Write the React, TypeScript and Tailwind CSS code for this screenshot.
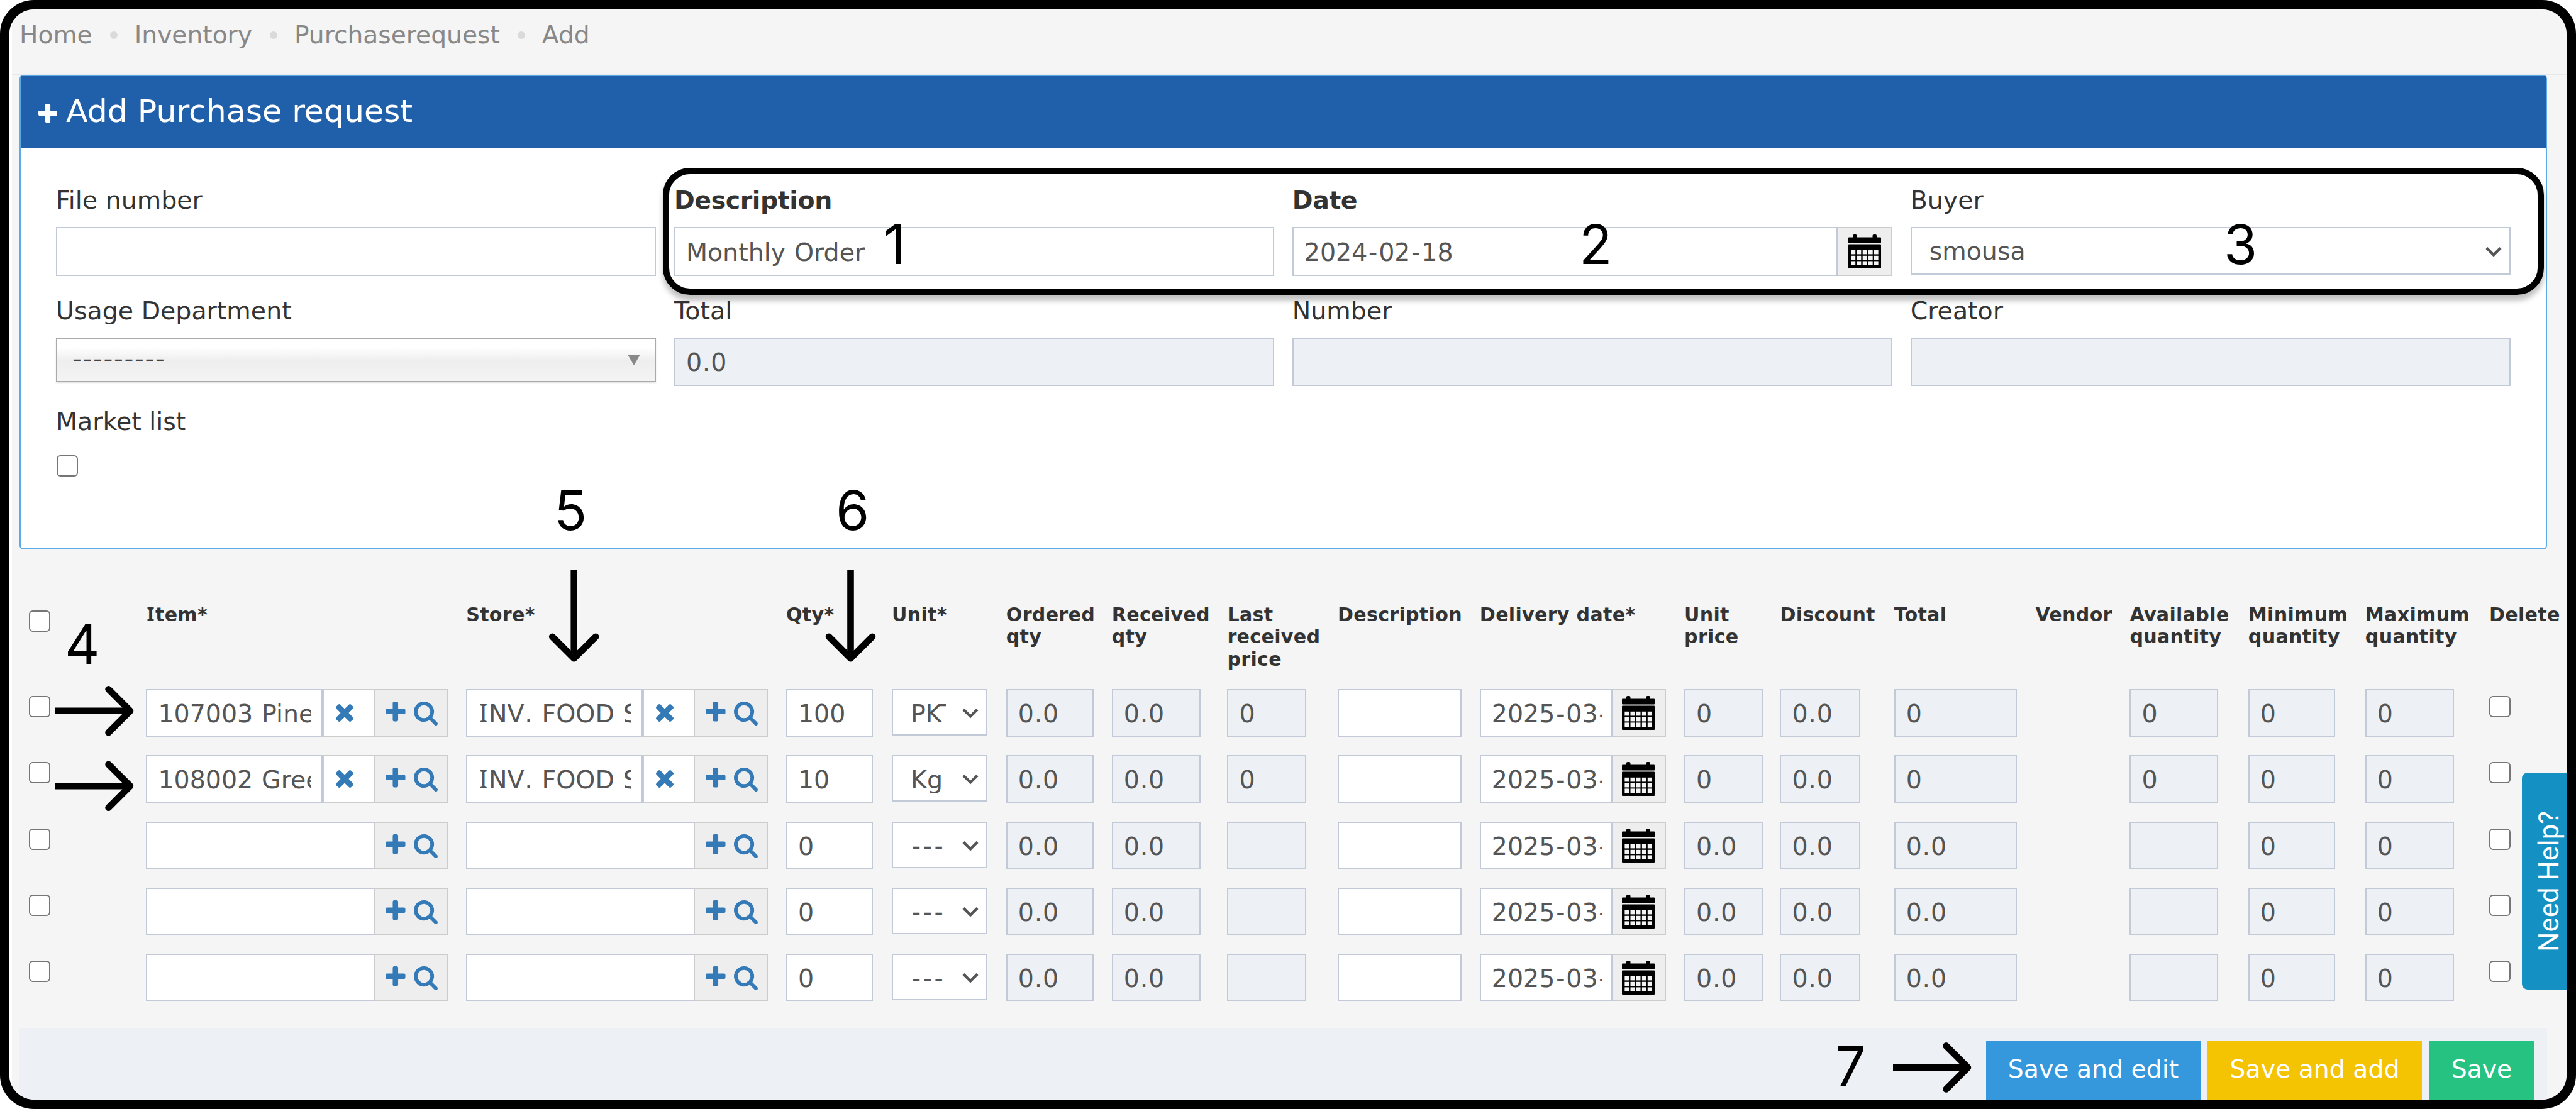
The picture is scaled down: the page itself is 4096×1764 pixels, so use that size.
import React from "react";

const COLS =
  "grid grid-cols-[186.1px_508.8px_508.8px_168px_181.8px_168px_183.7px_175.5px_225.9px_325.2px_152.4px_181.2px_224.8px_150px_188.4px_186px_197.1px_100px]";

function V({ children }: { children: string }) {
  return (
    <>
      {children.split(/([-I.])/).map((part, i) => {
        if (part === "-") return <span key={i} className="mx-[0.046em]">-</span>;
        if (part === ".") return <span key={i} className="mx-[0.02em]">.</span>;
        if (part === "I")
          return (
            <span key={i} className="mx-[0.038em] font-['Noto_Sans'] text-[1.02em] leading-none">
              I
            </span>
          );
        return <React.Fragment key={i}>{part}</React.Fragment>;
      })}
    </>
  );
}

const PlusIcon = ({ className }: { className: string }) => (
  <svg viewBox="192 128 1408 1408" className={className} fill="currentColor">
    <path d="M1600 736v192q0 40-28 68t-68 28h-416v416q0 40-28 68t-68 28h-192q-40 0-68-28t-28-68v-416h-416q-40 0-68-28t-28-68v-192q0-40 28-68t68-28h416v-416q0-40 28-68t68-28h192q40 0 68 28t28 68v416h416q40 0 68 28t28 68z" />
  </svg>
);

const TimesIcon = ({ className }: { className: string }) => (
  <svg viewBox="302 366 1188 1188" className={className} fill="currentColor">
    <path d="M1490 1322q0 40-28 68l-136 136q-28 28-68 28t-68-28l-294-294-294 294q-28 28-68 28t-68-28l-136-136q-28-28-28-68t28-68l294-294-294-294q-28-28-28-68t28-68l136-136q28-28 68-28t68 28l294 294 294-294q28-28 68-28t68 28l136 136q28 28 28 68t-28 68l-294 294 294 294q28 28 28 68z" />
  </svg>
);

const SearchIcon = ({ className }: { className: string }) => (
  <svg viewBox="64 128 1664 1664" className={className} fill="currentColor">
    <path d="M1216 832q0-185-131.500-316.500t-316.500-131.500-316.500 131.500-131.500 316.500 131.500 316.500 316.500 131.500 316.500-131.500 131.500-316.500zm512 832q0 52-38 90t-90 38q-54 0-90-38l-343-342q-179 124-399 124-143 0-273.500-55.500t-225-150-150-225-55.500-273.500 55.500-273.500 150-225 225-150 273.500-55.500 273.500 55.500 225 150 150 225 55.500 273.500q0 220-124 399l343 343q37 37 37 90z" />
  </svg>
);

function CalendarIcon() {
  return (
    <svg viewBox="0 0 52 54" className="h-[54px] w-[52px] shrink-0">
      <rect x="7" y="0" width="6.5" height="8" rx="2" />
      <rect x="38.5" y="0" width="6.5" height="8" rx="2" />
      <rect x="0" y="4.5" width="52" height="9" rx="1" />
      <rect x="0" y="15.5" width="52" height="38.5" rx="1" />
      {[4.4, 13.5, 22.7, 31.9, 40.8].map((x) =>
        [24.8, 33.8, 42.4].map((y) => (
          <rect key={`${x}-${y}`} x={x} y={y} width="6.8" height="6.6" fill="#f4f4f4" />
        )),
      )}
    </svg>
  );
}

const Chevron = () => (
  <svg viewBox="0 0 26 17" className="h-[17px] w-[26px]" fill="none" stroke="#555" strokeWidth="4.4">
    <path d="M2 2.5 13 13.5 24 2.5" />
  </svg>
);

const Box = ({ className = "" }: { className?: string }) => (
  <div className={`size-[34px] rounded-[6px] border-[2.5px] border-[#767676] bg-white ${className}`} />
);

function Input({
  value = "",
  ro = false,
  className = "",
}: {
  value?: string;
  ro?: boolean;
  className?: string;
}) {
  return (
    <div
      className={`flex items-center border-2 border-[#c2cad8] pt-[2px] pr-[17px] pl-[17px] text-[39.5px] text-[#555] ${
        ro ? "bg-[#edf1f6]" : "bg-white"
      } ${className}`}
    >
      <div className="w-full overflow-hidden whitespace-nowrap leading-[60px] [word-spacing:0.034em]">
        <V>{value}</V>
      </div>
    </div>
  );
}

function Field({
  label,
  bold = false,
  children,
}: {
  label: string;
  bold?: boolean;
  children: React.ReactNode;
}) {
  return (
    <div className="flex flex-col gap-[11px]">
      <div className={`h-[60px] text-[39.5px] leading-[57px] text-[#333] ${bold ? "font-bold tracking-[-0.4px]" : ""}`}>
        {label}
      </div>
      {children}
    </div>
  );
}

function Lookup({ value }: { value: string }) {
  return (
    <div className="flex h-[76px] w-[479.4px]">
      {value ? (
        <>
          <Input value={value} className="h-[76px] w-[280.6px]" />
          <div className="flex h-[76px] w-[81.4px] items-center border-y-2 border-l-2 border-[#ccc] bg-white pl-[19px]">
            <TimesIcon className="size-[28px] text-[#337ab7]" />
          </div>
        </>
      ) : (
        <Input className="h-[76px] w-[362px] border-r-0" />
      )}
      <div className="flex h-[76px] grow items-start border-2 border-[#ccc] bg-[#eee] pt-[18px] pl-[17px] text-[#337ab7]">
        <PlusIcon className="size-[31.5px]" />
        <SearchIcon className="ml-[13px] size-[38px]" />
      </div>
    </div>
  );
}

function UnitSelect({ value }: { value: string }) {
  return (
    <div className="flex h-[74px] w-[152px] items-center border-2 border-[#c2cad8] bg-white pt-[3px] pl-[28px] text-[39.5px] text-[#555]">
      <div className="w-[56px] overflow-hidden whitespace-nowrap leading-[60px]">
        <V>{value}</V>
      </div>
      <div className="ml-[26px] shrink-0">
        <Chevron />
      </div>
    </div>
  );
}

type Row = {
  item: string;
  store: string;
  qty: string;
  unit: string;
  last: string;
  price: string;
  total: string;
  avail: string;
};

const empty: Row = { item: "", store: "", qty: "0", unit: "---", last: "", price: "0.0", total: "0.0", avail: "" };

const rows: Row[] = [
  { item: "107003 Pine", store: "INV. FOOD S", qty: "100", unit: "PKT", last: "0", price: "0", total: "0", avail: "0" },
  { item: "108002 Gree", store: "INV. FOOD S", qty: "10", unit: "Kg", last: "0", price: "0", total: "0", avail: "0" },
  empty,
  empty,
  empty,
];

const heads = [
  "Item*",
  "Store*",
  "Qty*",
  "Unit*",
  "Ordered\nqty",
  "Received\nqty",
  "Last\nreceived\nprice",
  "Description",
  "Delivery date*",
  "Unit\nprice",
  "Discount",
  "Total",
  "Vendor",
  "Available\nquantity",
  "Minimum\nquantity",
  "Maximum\nquantity",
  "Delete",
];

const Dot = () => <span className="mr-[27px] ml-[28px] size-[12px] rounded-full bg-[#dadada]" />;

const RightArrow = ({ x, y }: { x: number; y: number }) => (
  <g transform={`translate(${x} ${y})`}>
    <path d="M0 0H117" strokeLinecap="butt" />
    <path d="M84.500 -34.500 119 0 84.500 34.500" />
  </g>
);

const DownArrow = ({ x, y }: { x: number; y: number }) => (
  <g transform={`translate(${x} ${y})`}>
    <path d="M0 0V138" strokeLinecap="butt" />
    <path d="M-34.500 106 0 140.500 34.500 106" />
  </g>
);

const mark = "absolute font-['Inter'] text-[86px] leading-[86px] text-black";

export default function App() {
  return (
    <div className="relative h-[1764px] w-[4096px] overflow-hidden bg-white font-['DejaVu_Sans',sans-serif]">
      <div className="h-[1764px] w-[4096px] overflow-hidden rounded-[54px] border-[15px] border-black bg-white">
        <div className="flex h-[1734px] flex-col border-l-[4px] border-white bg-[#f5f5f5]">
          <nav className="flex h-[104px] shrink-0 items-center border-b-2 border-[#e5e9ee] pb-[20px] pl-[12px] text-[39.2px] text-[#888]">
            <span>Home</span>
            <Dot />
            <span>Inventory</span>
            <Dot />
            <span>Purchaserequest</span>
            <Dot />
            <span>Add</span>
          </nav>

          <section className="ml-[12px] h-[755px] w-[4019px] shrink-0 rounded-[6px] border-2 border-[#5cabe6] bg-white">
            <header className="flex h-[114px] items-center bg-[#205faa] pl-[28px] text-white">
              <PlusIcon className="mt-[3px] size-[30px]" />
              <h1 className="-mt-[2px] ml-[14px] text-[50.5px] leading-[60px]">Add Purchase request</h1>
            </header>
            <div className="grid auto-rows-[176px] grid-cols-4 gap-x-[28.5px] px-[56px] pt-[54.500px]">
              <Field label="File number">
                <Input className="h-[78px]" />
              </Field>
              <Field label="Description" bold>
                <Input value="Monthly Order" className="h-[78px]" />
              </Field>
              <Field label="Date" bold>
                <div className="flex">
                  <Input value="2024-02-18" className="h-[78px] grow" />
                  <div className="flex h-[78px] w-[87px] items-center border-2 border-l-0 border-[#ccc] bg-[#eee] pl-[17px]">
                    <CalendarIcon />
                  </div>
                </div>
              </Field>
              <Field label="Buyer">
                <div className="flex h-[76px] items-center justify-between border-2 border-[#c2cad8] bg-white pt-[3px] pr-[12px] pl-[28px] text-[39.5px] text-[#555]">
                  <span>smousa</span>
                  <Chevron />
                </div>
              </Field>
              <Field label="Usage Department">
                <div className="flex h-[71px] items-center justify-between border-2 border-[#aaa] bg-linear-to-b from-white from-20% via-[#eee] via-52% to-[#f4f4f4] pr-[23px] pl-[24px] text-[41px] text-[#444] shadow-[0_2px_2px_rgba(0,0,0,0.1)]">
                  <span className="tracking-[1.7px]">---------</span>
                  <svg viewBox="0 0 20 17" className="h-[17px] w-[20px]" fill="#888">
                    <path d="M0 0H20L10 17Z" />
                  </svg>
                </div>
              </Field>
              <Field label="Total">
                <Input value="0.0" ro className="h-[77px]" />
              </Field>
              <Field label="Number">
                <Input ro className="h-[77px]" />
              </Field>
              <Field label="Creator">
                <Input ro className="h-[77px]" />
              </Field>
              <Field label="Market list">
                <Box className="mt-[11px] ml-px" />
              </Field>
            </div>
          </section>

          <div className="shrink-0 pt-[86.500px] pl-[27.300px]">
            <div className={`${COLS} h-[135.500px] text-[30.1px] leading-[35.6px] font-bold tracking-[0.3px] text-[#333]`}>
              <Box className="mt-[10px]" />
              {heads.map((h, i) => (
                <div key={i} className="-mt-px whitespace-pre">
                  <V>{h}</V>
                </div>
              ))}
            </div>
            {rows.map((r, i) => (
              <div key={i} className={`${COLS} h-[105.300px] items-start`}>
                <Box className="mt-[11px]" />
                <Lookup value={r.item} />
                <Lookup value={r.store} />
                <Input value={r.qty} className="h-[76px] w-[138.500px]" />
                <UnitSelect value={r.unit} />
                <Input value="0.0" ro className="h-[76px] w-[138.800px]" />
                <Input value="0.0" ro className="h-[76px] w-[141.500px]" />
                <Input value={r.last} ro className="h-[76px] w-[126px]" />
                <Input className="h-[76px] w-[196.600px]" />
                <div className="flex w-[295.800px]">
                  <div className="flex h-[76px] w-[211px] items-center border-2 border-[#c2cad8] bg-white pt-[2px] pl-[17px] text-[39.5px] text-[#555]">
                    <div className="w-[175.500px] overflow-hidden whitespace-nowrap leading-[60px]">
                      <V>2025-03-</V>
                    </div>
                  </div>
                  <div className="flex h-[76px] grow items-start border-2 border-l-0 border-[#ccc] bg-[#eee] pt-[9px] pl-[15px]">
                    <CalendarIcon />
                  </div>
                </div>
                <Input value={r.price} ro className="h-[76px] w-[125.200px]" />
                <Input value="0.0" ro className="h-[76px] w-[127.900px]" />
                <Input value={r.total} ro className="h-[76px] w-[195.300px]" />
                <div />
                <Input value={r.avail} ro className="h-[76px] w-[140.800px]" />
                <Input value="0" ro className="h-[76px] w-[138.400px]" />
                <Input value="0" ro className="h-[76px] w-[140.900px]" />
                <Box className="mt-[11px]" />
              </div>
            ))}
          </div>

          <footer className="mt-[13px] ml-[12px] flex w-[4019px] grow items-stretch justify-end gap-[11px] bg-[#edf1f6] pt-[21px] pr-[20px] text-[39.4px] leading-[88px] text-white">
            <div className="w-[341px] bg-[#3598dc] text-center">Save and edit</div>
            <div className="w-[341px] bg-[#f4c302] text-center">Save and add</div>
            <div className="w-[168px] bg-[#26c281] text-center">Save</div>
          </footer>
        </div>
      </div>

      <div className="absolute top-[1229px] left-[4010px] flex h-[345px] w-[71px] items-center justify-end rounded-l-[9px] bg-[#1590c2]">
        <span className="rotate-180 font-['Roboto'] text-[43.8px] leading-[56px] whitespace-nowrap text-white [writing-mode:vertical-rl]">
          Need Help?
        </span>
      </div>

      <div className="absolute top-[266.500px] left-[1054px] h-[202.500px] w-[2991px] rounded-[43px] border-[10.600px] border-black shadow-[0_8.5px_8.5px_rgba(0,0,0,0.25)]" />

      <svg
        viewBox="0 0 4096 1764"
        className="absolute top-0 left-0 h-[1764px] w-[4096px]"
        fill="none"
        stroke="#000"
        strokeWidth="10.6"
        strokeLinecap="round"
        strokeLinejoin="round"
      >
        <DownArrow x={912.7} y={906.7} />
        <DownArrow x={1352.5} y={906.7} />
        <RightArrow x={88} y={1130.8} />
        <RightArrow x={88} y={1250.2} />
        <RightArrow x={3010} y={1697.9} />
      </svg>

      <span className={`${mark} top-[346px] left-[1405px]`}>1</span>
      <span className={`${mark} top-[346px] left-[2511px]`}>2</span>
      <span className={`${mark} top-[346px] left-[3536px]`}>3</span>
      <span className={`${mark} top-[982px] left-[103px]`}>4</span>
      <span className={`${mark} top-[769px] left-[881px]`}>5</span>
      <span className={`${mark} top-[769px] left-[1329px]`}>6</span>
      <span className={`${mark} top-[1653px] left-[2918px]`}>7</span>
    </div>
  );
}
